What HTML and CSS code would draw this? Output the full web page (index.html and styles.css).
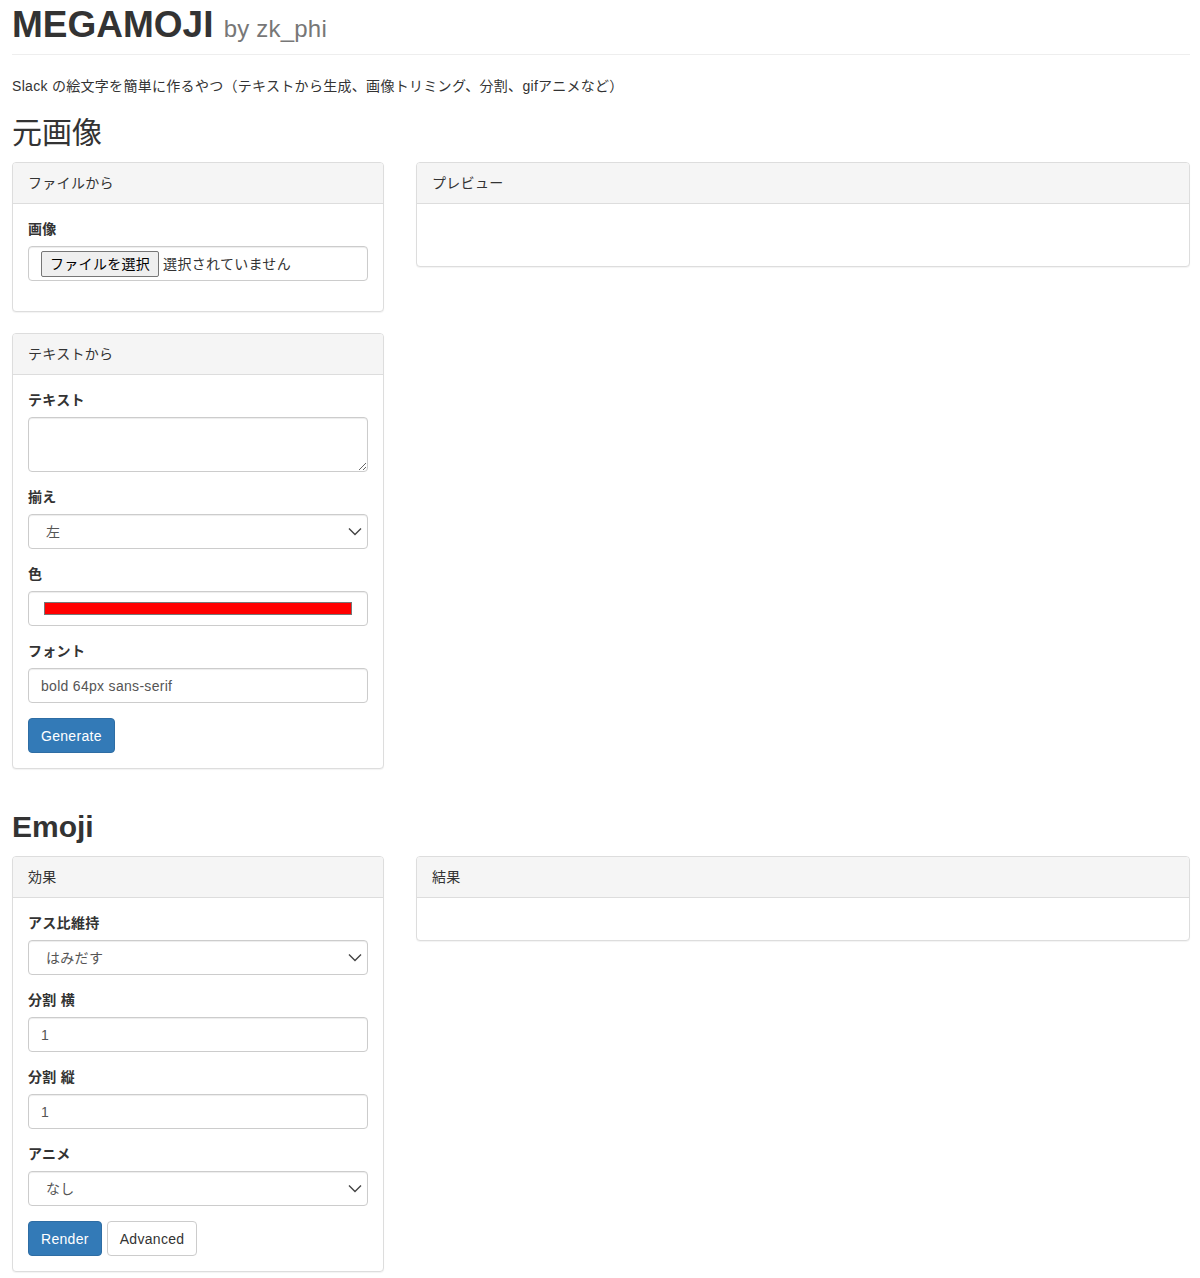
FILE: index.html
```html
<!DOCTYPE html>
<html lang="ja">

<head>
  <meta charset="UTF-8">
  <meta name="viewport" content="width=device-width, initial-scale=1.0">
  <title>MEGAMOJI</title>
  <link rel="stylesheet" href="styles.css">
</head>

<body>
  <div class="page-header">
    <h1>MEGAMOJI <small>by zk_phi</small></h1>
  </div>
  <p class="lead-text">Slack の絵文字を簡単に作るやつ（テキストから生成、画像トリミング、分割、gifアニメなど）</p>

  <h2 class="jp-title">元画像</h2>
  <div class="row">
    <div class="col-left">
      <div class="panel">
        <div class="panel-heading">ファイルから</div>
        <div class="panel-body">
          <div class="form-group">
            <label>画像</label>
            <div class="form-control file-control">
              <span class="file-button">ファイルを選択</span>
              <span class="file-name">選択されていません</span>
            </div>
          </div>
        </div>
      </div>

      <div class="panel">
        <div class="panel-heading">テキストから</div>
        <div class="panel-body">
          <div class="form-group">
            <label>テキスト</label>
            <textarea class="form-control text-area"></textarea>
          </div>
          <div class="form-group">
            <label>揃え</label>
            <div class="form-control select-box">
              <span>左</span>
              <svg width="14" height="9" viewBox="0 0 14 9"><path d="M1 1.5l6 6 6-6" fill="none" stroke="#444" stroke-width="1.4" /></svg>
            </div>
          </div>
          <div class="form-group">
            <label>色</label>
            <div class="form-control color-box">
              <div class="color-swatch"></div>
            </div>
          </div>
          <div class="form-group">
            <label>フォント</label>
            <input class="form-control" type="text" value="bold 64px sans-serif">
          </div>
          <div class="buttons">
            <span class="btn btn-primary">Generate</span>
          </div>
        </div>
      </div>
    </div>

    <div class="col-right">
      <div class="panel">
        <div class="panel-heading">プレビュー</div>
        <div class="panel-body preview-body"></div>
      </div>
    </div>
  </div>

  <h2>Emoji</h2>
  <div class="row">
    <div class="col-left">
      <div class="panel">
        <div class="panel-heading">効果</div>
        <div class="panel-body">
          <div class="form-group">
            <label>アス比維持</label>
            <div class="form-control select-box">
              <span>はみだす</span>
              <svg width="14" height="9" viewBox="0 0 14 9"><path d="M1 1.5l6 6 6-6" fill="none" stroke="#444" stroke-width="1.4" /></svg>
            </div>
          </div>
          <div class="form-group">
            <label>分割 横</label>
            <input class="form-control" type="text" value="1">
          </div>
          <div class="form-group">
            <label>分割 縦</label>
            <input class="form-control" type="text" value="1">
          </div>
          <div class="form-group">
            <label>アニメ</label>
            <div class="form-control select-box">
              <span>なし</span>
              <svg width="14" height="9" viewBox="0 0 14 9"><path d="M1 1.5l6 6 6-6" fill="none" stroke="#444" stroke-width="1.4" /></svg>
            </div>
          </div>
          <div class="buttons">
            <span class="btn btn-primary">Render</span>
            <span class="btn btn-default">Advanced</span>
          </div>
        </div>
      </div>
    </div>

    <div class="col-right">
      <div class="panel">
        <div class="panel-heading">結果</div>
        <div class="panel-body result-body"></div>
      </div>
    </div>
  </div>
</body>

</html>
```

FILE: styles.css
```css
* {
  box-sizing: border-box;
}

body {
  margin: 0;
  padding: 0 10px 0 12px;
  font-family: "Liberation Sans", "Noto Sans CJK JP", sans-serif;
  font-size: 14px;
  line-height: 20px;
  letter-spacing: 0.3px;
  color: #333;
  background-color: #fff;
}

/* ヘッダー */
.page-header {
  padding-bottom: 5px;
  border-bottom: 1px solid #eee;
}

h1 {
  margin: 5px 0 0;
  font-size: 37px;
  line-height: 40px;
  font-weight: bold;
  letter-spacing: 0;
}

h1 small {
  font-size: 24px;
  font-weight: normal;
  color: #777;
  letter-spacing: 0.2px;
}

.lead-text {
  margin: 21px 0 2px;
}

h2 {
  margin: 20px 0 13px;
  font-size: 30px;
  line-height: 33px;
  font-weight: bold;
  letter-spacing: 0;
}

h2.jp-title {
  font-weight: normal;
}

/* 2カラム */
.row {
  display: grid;
  grid-template-columns: 372px 1fr;
  column-gap: 32px;
  align-items: start;
}

/* パネル */
.panel {
  margin-bottom: 21px;
  border: 1px solid #ddd;
  border-radius: 4px;
  background-color: #fff;
  box-shadow: 0 1px 1px rgba(0, 0, 0, 0.05);
}

.panel-heading {
  padding: 10px 15px;
  background-color: #f5f5f5;
  border-bottom: 1px solid #ddd;
  border-radius: 3px 3px 0 0;
}

.panel-body {
  padding: 15px;
}

.preview-body {
  height: 62px;
}

.result-body {
  height: 42px;
}

/* フォーム */
.form-group {
  margin-bottom: 15px;
}

label {
  display: block;
  margin-bottom: 7px;
  font-weight: bold;
}

.form-control {
  display: block;
  width: 100%;
  height: 35px;
  padding: 6px 12px;
  font-family: inherit;
  font-size: 14px;
  line-height: 20px;
  letter-spacing: 0.3px;
  color: #555;
  background-color: #fff;
  border: 1px solid #ccc;
  border-radius: 4px;
  box-shadow: inset 0 1px 1px rgba(0, 0, 0, 0.075);
}

.text-area {
  height: 55px;
  resize: vertical;
}

.file-control {
  display: flex;
  align-items: center;
  padding: 0 12px;
  color: #333;
}

.file-button {
  height: 26px;
  padding: 2px 8px;
  margin-right: 4px;
  color: #000;
  background-color: #efefef;
  border: 1px solid #767676;
  border-radius: 2px;
  line-height: 20px;
}

.select-box {
  display: flex;
  align-items: center;
  justify-content: space-between;
  padding: 6px 5px 6px 17px;
}

.color-box {
  padding: 10px 15px;
}

.color-swatch {
  height: 13px;
  background-color: #f00;
  border: 1px solid #777;
}

/* ボタン */
.buttons {
  display: flex;
  gap: 5px;
}

.btn {
  display: inline-block;
  height: 35px;
  padding: 7px 12px;
  font-size: 14px;
  line-height: 20px;
  border: 1px solid transparent;
  border-radius: 4px;
}

.btn-primary {
  color: #fff;
  background-color: #337ab7;
  border-color: #2e6da4;
}

.btn-default {
  color: #333;
  background-color: #fff;
  border-color: #ccc;
}
```
